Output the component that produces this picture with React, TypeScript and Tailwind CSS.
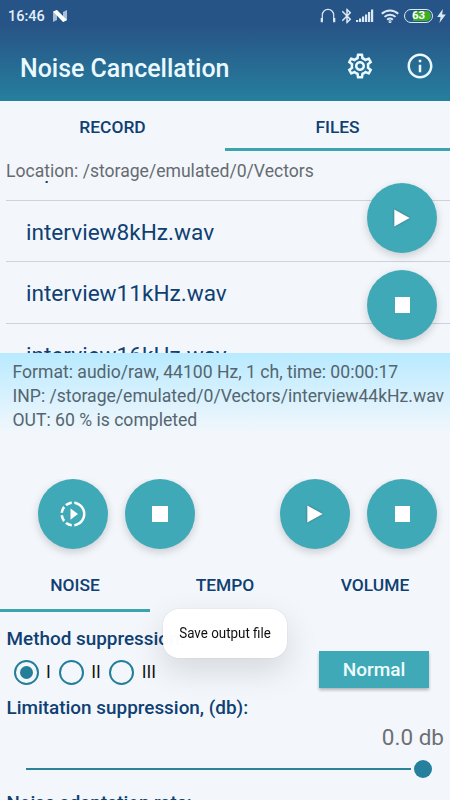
import type { ReactNode } from "react";
import { MdBluetooth, MdOutlineSettings, MdInfoOutline, MdSlowMotionVideo } from "react-icons/md";

function Fab({ children }: { children: ReactNode }) {
  return (
    <button className="flex h-[70px] w-[70px] shrink-0 items-center justify-center rounded-full bg-[#40a9b7] text-white shadow-[0_3px_8px_rgba(0,0,0,0.18)]">
      {children}
    </button>
  );
}

function PlayGlyph() {
  return (
    <svg width="16" height="18" viewBox="0 0 16 18" className="drop-shadow-[0_0_1px_rgba(60,60,60,0.6)]">
      <path d="M0.3 0.5 15.7 9 0.3 17.5z" fill="#fff" />
    </svg>
  );
}

function StopGlyph() {
  return <span className="block h-[15.5px] w-[15.5px] bg-white" />;
}

function StatusIcons() {
  return (
    <div className="flex h-4 items-center text-[#dbe9f6]">
      <svg width="16" height="16" viewBox="0 0 16 16" fill="none" stroke="currentColor">
        <path d="M2.3 13V7a5.7 5.7 0 0 1 11.4 0v6" strokeWidth="1.2" />
        <path d="M1.8 10v4.2M14.2 10v4.2" strokeWidth="2.2" />
      </svg>
      <MdBluetooth className="ml-[2px]" size={18} />
      <svg width="18" height="14" viewBox="0 0 18 14" fill="currentColor">
        <path d="M0 11h2.2v2H0zM3 9.5h2.2V13H3zM6 7.5h2.2V13H6zM9 5.5h2.2V13H9zM12 3h2.2v10H12zM15 .5h2.2V13H15z" />
      </svg>
      <svg className="ml-[7px]" width="18" height="14" viewBox="0 0 18 14" fill="none" stroke="currentColor" strokeWidth="2">
        <path d="M.8 4.8a11.8 11.8 0 0 1 16.4 0M3.5 7.9a7.8 7.8 0 0 1 11 0M6.2 10.7a4 4 0 0 1 5.6 0" />
        <circle cx="9" cy="12.6" r=".5" />
      </svg>
      <div className="relative ml-[5px] flex h-[14px] w-[29px] items-center justify-end overflow-hidden rounded-full border-[1.5px] border-[#dbe9f6] p-px">
        <span className="h-full w-[18px] rounded-r-full bg-[#3caf25]" />
        <span className="absolute inset-0 flex items-center justify-center text-[11.5px] font-bold text-white">63</span>
      </div>
      <svg className="ml-[4px]" width="9" height="14" viewBox="0 0 9 14" fill="currentColor">
        <path d="M5.8 0 .2 8h3.4L2.4 14 8.8 5.6H5.2z" />
      </svg>
    </div>
  );
}

const files = ["input.wav", "interview8kHz.wav", "interview11kHz.wav", "interview16kHz.wav"];

function Radio({ label, checked }: { label: string; checked?: boolean }) {
  return (
    <label className="flex items-center text-[17.5px] text-[#151515]">
      <span className="mr-[7.5px] flex h-[25px] w-[25px] items-center justify-center rounded-full border-2 border-[#237f99]">
        {checked && <span className="h-[13px] w-[13px] rounded-full bg-[#237f99]" />}
      </span>
      {label}
    </label>
  );
}

export default function App() {
  return (
    <div className="relative flex h-[800px] w-[450px] flex-col overflow-hidden bg-[#f3f7fc] font-['Roboto','Liberation_Sans',sans-serif] text-[#0f4072]">
      <header className="h-[101px] shrink-0 bg-gradient-to-b from-[#275486] from-25% to-[#257f9d]">
        <div className="flex h-8 items-center pr-[4px] pl-[8px]">
          <span className="pt-[2px] text-[14.5px] font-medium text-[#e1effa]">16:46</span>
          <svg className="ml-[8px]" width="14" height="12" viewBox="0 0 14 12">
            <path d="M0 2 4 0v10L0 12z" fill="#a9bfd5" />
            <path d="M10 2 14 0v10l-4 2z" fill="#a9bfd5" />
            <path d="M0 1.5 4 0l10 10-4 2z" fill="#fff" />
          </svg>
          <div className="ml-auto">
            <StatusIcons />
          </div>
        </div>
        <div className="flex h-[69px] items-center pr-[15px] pb-px pl-5 text-[#eaf9ff]">
          <h1 className="pt-[5px] text-[24.95px] font-medium">Noise Cancellation</h1>
          <MdOutlineSettings className="ml-auto" size={30} />
          <MdInfoOutline className="ml-[30px]" size={30} />
        </div>
      </header>

      <nav className="grid h-[50px] shrink-0 grid-cols-2 text-center text-[17.4px] font-medium">
        <div className="h-[50px] leading-[52px]">RECORD</div>
        <div className="h-[50px] border-b-[3px] border-[#3ba4af] leading-[52px]">FILES</div>
      </nav>

      <p className="h-[30px] shrink-0 pl-[6px] text-[17.58px] leading-[40px] text-[#666b70]">
        Location: /storage/emulated/0/Vectors
      </p>

      <section className="relative h-[171.5px] shrink-0">
        <div className="h-full overflow-hidden">
          <ul className="-mt-[42px] ml-[6px]">
            {files.map((name) => (
              <li key={name} className="h-[61.5px] border-b border-[#ced3d9] pl-5 text-[22.6px] leading-[63px]">
                {name}
              </li>
            ))}
          </ul>
        </div>
        <div className="absolute top-[1.5px] right-[12.7px] flex flex-col gap-[17.5px]">
          <Fab><PlayGlyph /></Fab>
          <Fab><StopGlyph /></Fab>
        </div>
      </section>

      <section className="relative h-[126.5px] shrink-0 bg-gradient-to-b from-[#b8eaff] to-[#f3f7fc] to-65% pt-[7px] pl-[12.5px] text-[17.58px] leading-[24px] whitespace-nowrap text-[#54656f]">
        <p>Format: audio/raw, 44100 Hz, 1 ch, time: 00:00:17</p>
        <p>INP: /storage/emulated/0/Vectors/interview44kHz.wav</p>
        <p>OUT: 60 % is completed</p>
      </section>

      <div className="flex h-[82.5px] shrink-0 items-start pl-[37.5px]">
        <Fab><MdSlowMotionVideo size={30} /></Fab>
        <div className="ml-[17.5px]"><Fab><StopGlyph /></Fab></div>
        <div className="ml-[85px]"><Fab><PlayGlyph /></Fab></div>
        <div className="ml-[17.3px]"><Fab><StopGlyph /></Fab></div>
      </div>

      <nav className="grid h-[50.5px] shrink-0 grid-cols-3 text-center text-[17.4px] leading-[47px] font-medium">
        <div className="border-b-[3.5px] border-[#3ba4af]">NOISE</div>
        <div>TEMPO</div>
        <div>VOLUME</div>
      </nav>

      <section className="flex min-h-0 flex-1 flex-col pl-[6.5px]">
        <div className="flex h-[84px] shrink-0 justify-between">
          <div>
            <h2 className="mt-[15px] text-[18.9px] leading-[24px] font-medium">Method suppression:</h2>
            <div className="mt-[8px] flex pl-[7px]">
              <Radio label="I" checked />
              <div className="ml-[8px]"><Radio label="II" /></div>
              <div className="ml-[8.5px]"><Radio label="III" /></div>
            </div>
          </div>
          <button className="mt-[39px] mr-[21px] h-[37px] w-[110px] bg-[#40a9b7] pt-[2px] text-[19px] font-medium text-[#eefcff] shadow-[0_2px_3px_rgba(0,0,0,0.28)]">
            Normal
          </button>
        </div>
        <h2 className="text-[18.9px] leading-[24px] font-medium">Limitation suppression, (db):</h2>
        <p className="mt-[3px] pr-[6px] text-right text-[22.5px] leading-[28px] text-[#6c7074]">0.0 db</p>
        <div className="mt-[9px] flex h-[19px] items-center pl-[19.5px]">
          <span className="h-[2.5px] w-[385px] bg-[#2b8399]" />
          <span className="ml-[3px] h-[18px] w-[18px] rounded-full bg-[#25809d]" />
        </div>
        <h2 className="mt-[13px] text-[18.75px] leading-[24px] font-medium whitespace-nowrap">Noise adaptation rate:</h2>
      </section>

      <div className="absolute top-[609px] left-[163px] flex h-[49px] w-[124px] items-center justify-center rounded-[16px] bg-white/98 shadow-[0_0_1px_rgba(0,0,0,0.25),0_12px_32px_rgba(0,0,0,0.13)]">
        <span className="scale-x-[0.88] text-[15.2px] whitespace-nowrap text-[#101010]">Save output file</span>
      </div>
    </div>
  );
}
